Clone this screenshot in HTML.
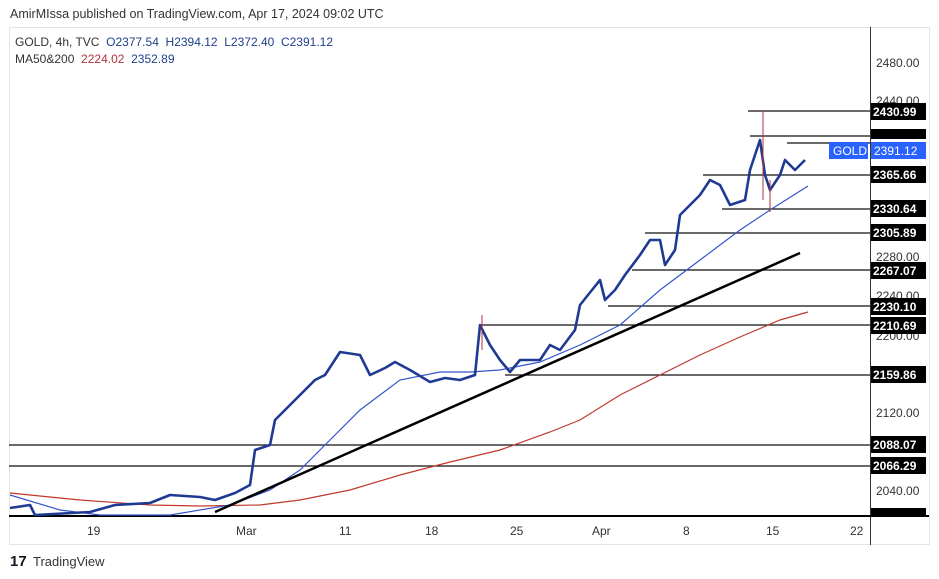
<!DOCTYPE html><html><head><style>
body{margin:0;width:939px;height:579px;background:#fff;font-family:"Liberation Sans",sans-serif;overflow:hidden;position:relative}
.t{position:absolute;white-space:nowrap}
</style></head><body>
<div class="t" style="left:10px;top:7px;font-size:12.5px;color:#333">AmirMIssa published on TradingView.com, Apr 17, 2024 09:02 UTC</div>
<svg width="939" height="579" style="position:absolute;left:0;top:0">
<rect x="9.5" y="27.5" width="920" height="517" fill="none" stroke="#e4e4e4"/>
<line x1="870.5" y1="27" x2="870.5" y2="545" stroke="#333"/>
<line x1="9" y1="516" x2="929" y2="516" stroke="#000" stroke-width="2"/>
<g font-size="12" fill="#333" font-family="Liberation Sans,sans-serif">
<text x="876" y="67">2480.00</text><text x="876" y="105">2440.00</text><text x="876" y="261">2280.00</text><text x="876" y="300">2240.00</text><text x="876" y="340">2200.00</text><text x="876" y="417">2120.00</text><text x="876" y="495">2040.00</text>
<text x="87" y="535">19</text><text x="236" y="535">Mar</text><text x="339" y="535">11</text><text x="425" y="535">18</text><text x="510" y="535">25</text><text x="592" y="535">Apr</text><text x="683" y="535">8</text><text x="766" y="535">15</text><text x="850" y="535">22</text>
</g>
<g stroke="#111" stroke-width="1.3">
<line x1="748" y1="111" x2="870" y2="111"/><line x1="750" y1="136" x2="870" y2="136"/><line x1="787" y1="143" x2="870" y2="143"/>
<line x1="703" y1="175" x2="870" y2="175"/><line x1="722" y1="209" x2="870" y2="209"/><line x1="645" y1="233" x2="870" y2="233"/>
<line x1="632" y1="270" x2="870" y2="270"/><line x1="608" y1="306" x2="870" y2="306"/><line x1="480" y1="325" x2="870" y2="325"/>
<line x1="505" y1="375" x2="870" y2="375"/><line x1="9" y1="445" x2="870" y2="445"/><line x1="9" y1="466" x2="870" y2="466"/>
</g>
<polyline fill="none" stroke="#c0392b" stroke-width="1.2" points="10,493 80,500 150,505 200,506 260,505 300,500 350,490 400,475 450,462 500,450 550,432 580,420 620,395 660,375 700,355 740,337 780,320 808,312"/>
<polyline fill="none" stroke="#3355cc" stroke-width="1.2" points="10,495 60,510 100,515 170,515 230,505 270,490 300,470 330,440 360,410 400,380 440,372 470,372 500,370 540,362 580,345 620,325 660,290 700,260 740,230 770,210 808,186"/>
<line x1="215" y1="512" x2="800" y2="253" stroke="#000" stroke-width="2.5"/>
<polyline fill="none" stroke="#1f3a93" stroke-width="2.6" stroke-linejoin="round" points="10,508 30,505 35,515 90,512 115,505 150,503 170,495 200,497 215,500 235,493 250,485 255,450 270,445 275,420 290,405 300,395 315,380 325,375 340,352 360,355 370,375 385,368 395,362 410,370 430,382 445,378 460,380 475,375 480,325 490,345 500,360 510,372 520,360 540,360 550,345 560,350 575,330 580,305 600,280 605,300 615,290 625,275 640,255 650,240 660,240 665,265 675,250 680,215 690,205 700,195 710,180 720,185 730,205 745,200 750,170 760,140 765,175 770,190 780,175 785,160 795,170 805,160"/>
<g stroke="#b03040" stroke-width="1"><line x1="763" y1="110" x2="763" y2="200"/><line x1="482" y1="315" x2="482" y2="350"/><line x1="770" y1="180" x2="770" y2="212"/></g>
<rect x="829" y="142" width="39" height="17" fill="#2962ff"/>
<text x="833" y="155" font-size="12" fill="#fff">GOLD</text>
<rect x="871" y="142" width="55" height="17" fill="#2962ff"/>
<text x="874" y="155" font-size="12" fill="#fff">2391.12</text>
<g font-size="12" fill="#fff" font-weight="bold">
<rect x="871" y="103" width="55" height="17" fill="#000"/><text x="873" y="116">2430.99</text>
<rect x="871" y="129" width="55" height="10" fill="#000"/>
<rect x="871" y="166" width="55" height="17" fill="#000"/><text x="873" y="179">2365.66</text>
<rect x="871" y="200" width="55" height="17" fill="#000"/><text x="873" y="213">2330.64</text>
<rect x="871" y="224" width="55" height="17" fill="#000"/><text x="873" y="237">2305.89</text>
<rect x="871" y="262" width="55" height="17" fill="#000"/><text x="873" y="275">2267.07</text>
<rect x="871" y="298" width="55" height="17" fill="#000"/><text x="873" y="311">2230.10</text>
<rect x="871" y="317" width="55" height="17" fill="#000"/><text x="873" y="330">2210.69</text>
<rect x="871" y="366" width="55" height="17" fill="#000"/><text x="873" y="379">2159.86</text>
<rect x="871" y="436" width="55" height="17" fill="#000"/><text x="873" y="449">2088.07</text>
<rect x="871" y="457" width="55" height="17" fill="#000"/><text x="873" y="470">2066.29</text>
<rect x="871" y="508" width="55" height="8" fill="#000"/>
</g>
<text x="10" y="566" font-size="15" font-weight="bold" fill="#131722">17</text>
</svg>
<div class="t" style="left:15px;top:35px;font-size:12px;color:#333">GOLD, 4h, TVC &nbsp;<span style="color:#1e3f8a">O2377.54 &nbsp;H2394.12 &nbsp;L2372.40 &nbsp;C2391.12</span></div>
<div class="t" style="left:15px;top:52px;font-size:12px;color:#333">MA50&amp;200 &nbsp;<span style="color:#b03040">2224.02</span> &nbsp;<span style="color:#1e3f8a">2352.89</span></div>
<div class="t" style="left:33px;top:554px;font-size:13px;color:#333">TradingView</div>
</body></html>
